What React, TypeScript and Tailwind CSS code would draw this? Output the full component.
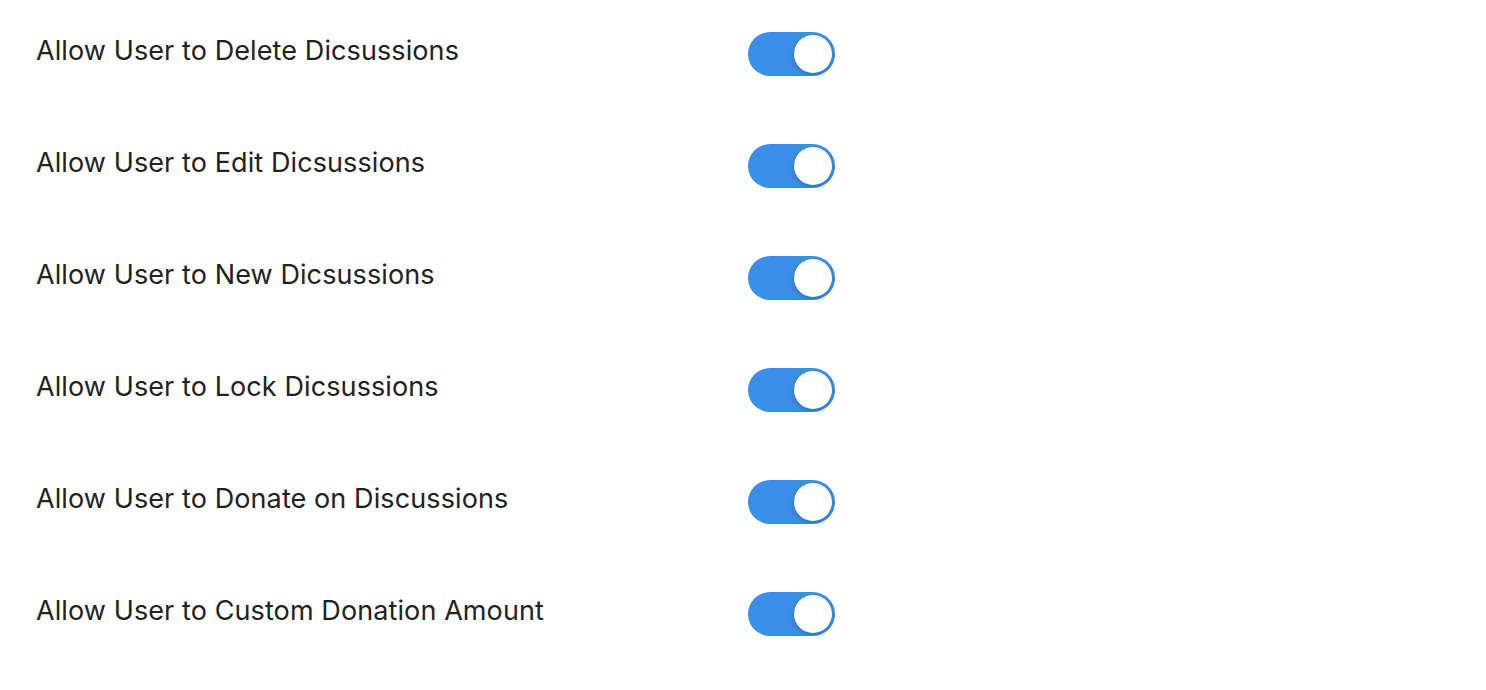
import { useState } from 'react';

const SETTINGS = [
  'Allow User to Delete Dicsussions',
  'Allow User to Edit Dicsussions',
  'Allow User to New Dicsussions',
  'Allow User to Lock Dicsussions',
  'Allow User to Donate on Discussions',
  'Allow User to Custom Donation Amount',
];

function Toggle({ on, onChange }: { on: boolean; onChange: () => void }) {
  return (
    <button
      type="button"
      onClick={onChange}
      className={`flex items-center w-[87px] h-[44px] rounded-full px-[3px] transition-colors ${
        on ? 'bg-[#3a8de8] justify-end' : 'bg-gray-300 justify-start'
      }`}
    >
      <span className="w-[38px] h-[38px] rounded-full bg-white shadow-[0_2px_4px_rgba(0,0,0,0.2)]" />
    </button>
  );
}

export default function App() {
  const [values, setValues] = useState(SETTINGS.map(() => true));

  return (
    <div className="min-h-screen bg-white pt-8 pl-9 font-['Inter',sans-serif] text-[#222]">
      <div className="flex flex-col gap-[68px]">
        {SETTINGS.map((label, i) => (
          <div key={label} className="flex items-center h-[44px]">
            <span className="w-[712px] text-[27px] leading-none -mt-2 tracking-[0.1px]">{label}</span>
            <Toggle
              on={values[i]}
              onChange={() => setValues((v) => v.map((x, j) => (j === i ? !x : x)))}
            />
          </div>
        ))}
      </div>
    </div>
  );
}
